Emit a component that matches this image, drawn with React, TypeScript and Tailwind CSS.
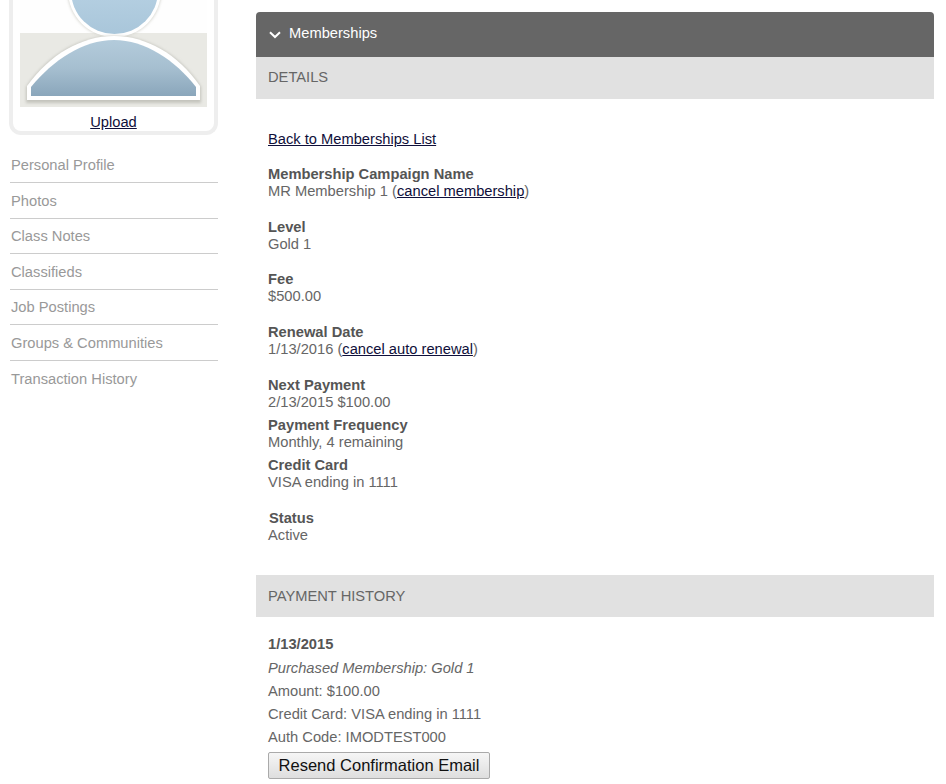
const navItems = [
  "Personal Profile",
  "Photos",
  "Class Notes",
  "Classifieds",
  "Job Postings",
  "Groups & Communities",
  "Transaction History",
];

const Avatar = () => (
  <svg viewBox="0 0 187 107" className="block h-[107px] w-[187px]">
    <defs>
      <linearGradient id="head" x1="0" y1="0" x2="0" y2="1">
        <stop offset="0.4" stopColor="#b8d2e4" />
        <stop offset="1" stopColor="#a9c6da" />
      </linearGradient>
      <linearGradient id="body" x1="0" y1="0" x2="0" y2="1">
        <stop offset="0" stopColor="#b3cbdb" />
        <stop offset="0.5" stopColor="#a6bfd0" />
        <stop offset="1" stopColor="#8aa6bb" />
      </linearGradient>
      <filter id="soft" x="-10%" y="-10%" width="120%" height="120%">
        <feGaussianBlur stdDeviation="1.8" />
      </filter>
    </defs>
    <rect width="187" height="107" fill="#fefefe" />
    <rect y="33" width="187" height="74" fill="#e9e9e4" />
    <circle cx="94.5" cy="-9.5" r="47" fill="#d4d4ce" filter="url(#soft)" />
    <circle cx="94.5" cy="-9.5" r="46.5" fill="#ffffff" />
    <circle cx="94.5" cy="-9.5" r="43.5" fill="url(#head)" />
    <path d="M6 103 L6 87 C29 53 62 36 94 36 C126 36 159 53 181 87 L181 103 Z" fill="#c4c4bd" filter="url(#soft)" />
    <path d="M7 100 L7 86 C30 54 62 36 94 36 C126 36 158 54 180 86 L180 100 Z" fill="#ffffff" />
    <path d="M11 96 L11 87 C33 60 63 40 94 40 C125 40 155 60 176 87 L176 96 Z" fill="url(#body)" />
  </svg>
);

const Field = ({ label, className, children }: { label: string; className?: string; children: React.ReactNode }) => (
  <div className={className}>
    <p className="font-bold text-[#555]">{label}</p>
    <p>{children}</p>
  </div>
);

const TextLink = ({ children }: { children: React.ReactNode }) => (
  <a href="#" className="text-[#0f0f3a] underline">{children}</a>
);

export default function App() {
  return (
    <div className="flex h-[784px] w-[946px] overflow-hidden bg-white font-['Liberation_Sans',Arial,sans-serif] text-[14.7px] leading-[17px] text-[#666]">
      <aside className="ml-[9px] w-[209px] shrink-0">
        <div className="rounded-b-[12px] border-x-4 border-b-4 border-[#eeeeee] pl-[7px] pr-[7px]">
          <Avatar />
          <div className="pt-[7px] text-center">
            <TextLink>Upload</TextLink>
          </div>
        </div>
        <ul className="ml-[1px] mt-[12.5px] text-[#999]">
          {navItems.map((item, i) => (
            <li
              key={item}
              className={i < navItems.length - 1 ? "h-[35.5px] border-b border-[#ccc] pl-[1px] pt-[9.5px]" : "h-[35px] pl-[1px] pt-[10px]"}
            >
              {item}
            </li>
          ))}
        </ul>
      </aside>

      <main className="ml-[38px] mt-[12px] w-[678px] shrink-0">
        <div className="flex h-[45px] items-center rounded-t-[4px] bg-[#666] pb-[2px] pl-[13px] text-white">
          <svg viewBox="0 0 12 8" className="mr-[8px] mt-[2px] h-[8px] w-[12px]" fill="none" stroke="#fff" strokeWidth="2">
            <path d="M1 1.2 L6 6 L11 1.2" />
          </svg>
          Memberships
        </div>
        <div className="flex h-[42px] items-center bg-[#e1e1e1] pb-[1px] pl-[12px] text-[#666]">DETAILS</div>

        <div className="px-[12px] pt-[32px]">
          <p><TextLink>Back to Memberships List</TextLink></p>
          <Field label="Membership Campaign Name" className="mt-[18px]">
            MR Membership 1 (<TextLink>cancel membership</TextLink>)
          </Field>
          <Field label="Level" className="mt-[19px]">Gold 1</Field>
          <Field label="Fee" className="mt-[18px]">$500.00</Field>
          <Field label="Renewal Date" className="mt-[19px]">
            1/13/2016 (<TextLink>cancel auto renewal</TextLink>)
          </Field>
          <Field label="Next Payment" className="mt-[19px]">2/13/2015 $100.00</Field>
          <Field label="Payment Frequency" className="mt-[6px]">Monthly, 4 remaining</Field>
          <Field label="Credit Card" className="mt-[6px]">VISA ending in 1111</Field>
          <Field label="Status" className="mt-[19px] [&>p:first-child]:pl-[1px]">Active</Field>
        </div>

        <div className="mt-[31px] flex h-[42px] items-center bg-[#e1e1e1] pl-[12px] text-[#666]">PAYMENT HISTORY</div>

        <div className="px-[12px] pt-[19px]">
          <p className="font-bold text-[#555]">1/13/2015</p>
          <p className="mt-[7px] italic">Purchased Membership: Gold 1</p>
          <p className="mt-[6px]">Amount: $100.00</p>
          <p className="mt-[6px]">Credit Card: VISA ending in 1111</p>
          <p className="mt-[6px]">Auth Code: IMODTEST000</p>
          <button className="mt-[6px] h-[27px] w-[222px] rounded-[2px] border border-[#aaa] bg-gradient-to-b from-[#f6f6f6] to-[#dedede] text-[16.5px] leading-none text-[#111]">
            Resend Confirmation Email
          </button>
        </div>
      </main>
    </div>
  );
}
